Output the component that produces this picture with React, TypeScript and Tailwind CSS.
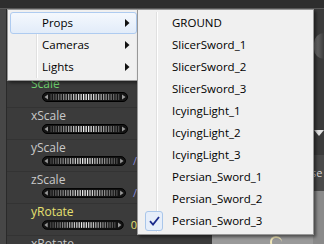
import React from "react";

const propRows = [
  { label: "Scale", color: "text-[#6fd36f]", value: "", valueColor: "" },
  { label: "xScale", color: "text-[#c9c9c9]", value: "", valueColor: "" },
  { label: "yScale", color: "text-[#c9c9c9]", value: "/", valueColor: "text-[#8c8cd8]" },
  { label: "zScale", color: "text-[#c9c9c9]", value: "/", valueColor: "text-[#8c8cd8]" },
  { label: "yRotate", color: "text-[#e6e070]", value: "0", valueColor: "text-[#e6e070]" },
  { label: "xRotate", color: "text-[#c9c9c9]", value: "", valueColor: "" },
];

const mainItems = ["Props", "Cameras", "Lights"];

const subItems = [
  "GROUND",
  "SlicerSword_1",
  "SlicerSword_2",
  "SlicerSword_3",
  "IcyingLight_1",
  "IcyingLight_2",
  "IcyingLight_3",
  "Persian_Sword_1",
  "Persian_Sword_2",
  "Persian_Sword_3",
];

function Knurl() {
  const stripes = Array.from({ length: 28 }, (_, i) => i);
  return (
    <svg width="86" height="10" viewBox="0 0 86 10">
      <rect x="0.5" y="0.5" width="85" height="9" rx="4.5" fill="#141414" stroke="#000" />
      {stripes.map((i) => {
        const x = 8.5 + i * 2.5;
        const d = Math.min(1, Math.abs(x - 43) / 36);
        const v = Math.round(250 - d * 190);
        return <rect key={i} x={x} y="2" width="1.3" height="6" fill={`rgb(${v},${v},${v})`} />;
      })}
      <path d="M2.5 5 L6 2.5 L6 7.5 Z" fill="#9a9a9a" />
      <path d="M83.5 5 L80 2.5 L80 7.5 Z" fill="#9a9a9a" />
    </svg>
  );
}

function Arrow() {
  return (
    <svg width="5" height="8" viewBox="0 0 5 8">
      <path d="M0 0 L4.5 4 L0 8 Z" fill="#111" />
    </svg>
  );
}

function Check() {
  return (
    <svg width="11" height="10" viewBox="0 0 11 10">
      <path d="M1 5.2 L4 8.5 L10 1" fill="none" stroke="#1b2a8c" strokeWidth="1.8" />
    </svg>
  );
}

export default function App() {
  return (
    <div className="relative w-[324px] h-[244px] overflow-hidden bg-[#3b3b3b] font-['Open_Sans','Noto_Sans',sans-serif]">
      {/* background tool window */}
      <div className="flex flex-col h-full">
        <div className="h-[9px] shrink-0 bg-[#2e2e2e] border-b border-[#595959]" />
        <div className="flex flex-1 min-h-0 overflow-hidden">
          <div className="w-[7px] shrink-0 bg-[#474747] border-r border-[#2a2a2a]" />
          <div className="w-[130px] shrink-0 flex flex-col pt-[67px]">
            {propRows.map((r) => (
              <div key={r.label} className="h-[32px] shrink-0 border-b border-[#333] pl-[24px] flex flex-col">
                <div className={`h-[15px] text-[12px] leading-[15px] ${r.color}`}>{r.label}</div>
                <div className="flex items-center gap-[7px] pl-[11px] mt-[1px]">
                  <Knurl />
                  <span className={`text-[11px] leading-[10px] ${r.valueColor}`}>{r.value}</span>
                </div>
              </div>
            ))}
          </div>
          <div className="flex-1 flex flex-col justify-end">
            <div className="h-[9px] flex">
              <div className="w-[75px] bg-[#3b3b3b]" />
              <div className="flex-1 bg-[#9a9a9a] relative overflow-hidden">
                <div className="absolute left-[58px] top-[1px] w-[12px] h-[12px] rounded-full border-l-2 border-t-2 border-[#efe6b8]" />
              </div>
            </div>
          </div>
          <div className="w-[11px] shrink-0 flex flex-col">
            <div className="h-[24px] shrink-0" />
            <div className="h-[26px] shrink-0 rounded-l-full bg-gradient-to-r from-[#7a7a7a] to-[#3b3b3b] ml-[1px]" />
            <div className="h-[71px] shrink-0" />
            <div className="h-0 w-0 shrink-0 border-l-[5px] border-r-[5px] border-t-[6px] border-l-transparent border-r-transparent border-t-[#e0e0e0] ml-[1px]" />
            <div className="h-[19px] shrink-0" />
            <div className="h-[36px] shrink-0 bg-[#4a4a4a] text-[11px] text-[#d8d8d8] leading-[36px] -ml-[2px]">se</div>
            <div className="flex-1 bg-[#8a8a8a]" />
          </div>
        </div>
      </div>

      {/* main context menu */}
      <div className="absolute left-[7px] top-[9px] w-[131px] h-[72px] bg-[#f0f0f0] border border-[#979797] shadow-[2px_2px_3px_rgba(0,0,0,0.45)] pt-[2px] pl-[2px] pr-0">
        <div className="absolute left-[28px] top-[2px] bottom-[2px] w-px bg-[#e0e0e0]" />
        <div className="absolute left-[29px] top-[2px] bottom-[2px] w-px bg-white" />
        {mainItems.map((m, i) => (
          <div
            key={m}
            className={`relative h-[22px] flex items-center pl-[31px] pr-[6px] text-[11.5px] text-black rounded-[3px] border ${
              i === 0
                ? "border-[#aecbf0] bg-gradient-to-b from-[#f4f8fd] to-[#e2ecf9]"
                : "border-transparent"
            }`}
          >
            <span className="flex-1">{m}</span>
            <Arrow />
          </div>
        ))}
      </div>

      {/* submenu */}
      <div className="absolute left-[137px] top-[9px] w-[177px] h-[226px] bg-[#f0f0f0] border border-[#979797] shadow-[2px_2px_3px_rgba(0,0,0,0.5)] pt-[2px] px-[2px]">
        <div className="absolute left-[18px] top-[2px] bottom-[2px] w-px bg-[#e0e0e0]" />
        <div className="absolute left-[19px] top-[2px] bottom-[2px] w-px bg-white" />
        {subItems.map((s, i) => (
          <div key={s} className="relative h-[22px] flex items-center pl-[32px] text-[11.5px] text-black">
            {i === subItems.length - 1 && (
              <div className="absolute left-[5px] top-[1px] w-[18px] h-[20px] rounded-[3px] border border-[#a9c6ea] bg-[#e6eefa] flex items-center justify-center">
                <Check />
              </div>
            )}
            {s}
          </div>
        ))}
      </div>
    </div>
  );
}
